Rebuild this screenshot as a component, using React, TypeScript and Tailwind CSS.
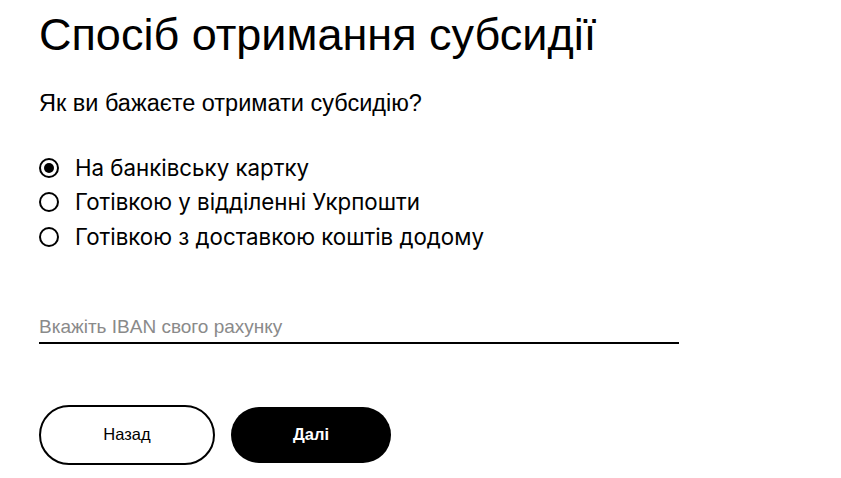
import React, { useState } from "react";

const options = [
  "На банківську картку",
  "Готівкою у відділенні Укрпошти",
  "Готівкою з доставкою коштів додому",
];

export default function App() {
  const [choice, setChoice] = useState(0);
  const [iban, setIban] = useState("");

  return (
    <div className="min-h-screen bg-white pl-[39px] pt-[6px] text-black">
      <h1 className="font-['Liberation_Sans',Arial,sans-serif] text-[45px] leading-[58px]">
        Спосіб отримання субсидії
      </h1>

      <p className="mt-[25px] font-['Liberation_Sans',Arial,sans-serif] text-[23.5px] leading-[28px]">
        Як ви бажаєте отримати субсидію?
      </p>

      <div className="mt-[39px] flex flex-col gap-[10.3px] font-['Inter',sans-serif] text-[22.3px] leading-[24px]">
        {options.map((label, i) => (
          <label key={label} className="flex cursor-pointer items-center gap-[16px]">
            <span className="flex h-[20px] w-[20px] items-center justify-center rounded-full border-2 border-black">
              {choice === i && <span className="h-[10px] w-[10px] rounded-full bg-black" />}
            </span>
            <input
              type="radio"
              name="method"
              className="hidden"
              checked={choice === i}
              onChange={() => setChoice(i)}
            />
            {label}
          </label>
        ))}
      </div>

      <input
        type="text"
        value={iban}
        onChange={(e) => setIban(e.target.value)}
        placeholder="Вкажіть IBAN свого рахунку"
        className="mt-[66px] block w-[640px] border-b-2 border-black pb-[3px] font-['Liberation_Sans',Arial,sans-serif] text-[19px] leading-[24px] outline-none placeholder:text-[#8a8a8a]"
      />

      <div className="mt-[61px] flex items-center gap-[16px] font-['Liberation_Sans',Arial,sans-serif] text-[16.5px]">
        <button className="h-[60px] w-[176px] rounded-full border-2 border-black bg-white">
          Назад
        </button>
        <button className="h-[56px] w-[160px] rounded-full bg-black font-bold text-white">
          Далі
        </button>
      </div>
    </div>
  );
}
